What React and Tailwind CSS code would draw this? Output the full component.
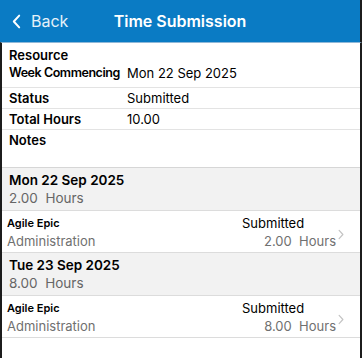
import React from "react";

const info = [
  { label: "Status", value: "Submitted" },
  { label: "Total Hours", value: "10.00" },
];

const days = [
  { date: "Mon 22 Sep 2025", hours: "2.00", entries: [{ title: "Agile Epic", task: "Administration", status: "Submitted", hours: "2.00" }] },
  { date: "Tue 23 Sep 2025", hours: "8.00", entries: [{ title: "Agile Epic", task: "Administration", status: "Submitted", hours: "8.00" }] },
];

const Chevron = ({ className }) => (
  <svg viewBox="0 0 8 14" className={className} fill="none" stroke="currentColor" strokeWidth="1.6" strokeLinecap="round" strokeLinejoin="round">
    <path d="M1.5 1.5 6.5 7l-5 5.5" />
  </svg>
);

const App = () => {
  return (
    <div className="w-[362px] h-[358px] flex flex-col bg-white overflow-hidden text-black" style={{ fontFamily: "Inter, 'Noto Sans', sans-serif" }}>
      <div className="h-[42px] shrink-0 bg-[#0a7bc4] border-r-2 border-[#1c1c1c] relative flex items-center">
        <div className="flex items-center pl-[12px] text-white">
          <svg viewBox="0 0 10 16" className="w-[9px] h-[15px]" fill="none" stroke="currentColor" strokeWidth="2.2" strokeLinecap="round" strokeLinejoin="round">
            <path d="M8 1.5 2 8l6 6.5" />
          </svg>
          <span className="ml-[10px] text-[16px] text-white/90">Back</span>
        </div>
        <div className="absolute inset-0 flex items-center justify-center pointer-events-none">
          <span className="text-[16px] font-semibold text-white">Time Submission</span>
        </div>
      </div>
      <div className="flex-1 flex flex-col border-t border-[#8fb8d8] border-l-2 border-r-2 border-l-[#1c1c1c] border-r-[#1c1c1c] leading-[18px]">
        <div className="pl-[7px] pt-[3px] pb-[5px] border-b border-[#e3e3e3]">
          <div className="h-[18px] flex items-center text-[13px] font-semibold">Resource</div>
          <div className="h-[18px] flex items-center text-[13px] whitespace-nowrap">
            <span className="w-[118px] shrink-0 font-semibold text-[12.5px] tracking-[-0.45px]">Week Commencing</span>
            <span>Mon 22 Sep 2025</span>
          </div>
        </div>
        {info.map((r) => (
          <div key={r.label} className="h-[21px] pl-[7px] flex items-center text-[13px] border-b border-[#e3e3e3]">
            <span className="w-[118px] shrink-0 font-semibold">{r.label}</span>
            <span>{r.value}</span>
          </div>
        ))}
        <div className="h-[38px] pl-[7px] pt-[1px] text-[13px] font-semibold border-b border-[#d6d6d6]">Notes</div>
        {days.map((d) => (
          <div key={d.date}>
            <div className="bg-[#f2f2f2] pl-[7px] pt-[3px] pb-[3px] border-b border-[#dcdcdc]">
              <div className="h-[18px] flex items-center text-[13.5px] font-semibold">{d.date}</div>
              <div className="h-[18px] flex items-center text-[13.5px] text-[#666]">{d.hours}&nbsp; Hours</div>
            </div>
            {d.entries.map((e, i) => (
              <div key={i} className="relative pl-[5px] pr-[24px] pt-[3px] pb-[2px] flex justify-between border-b border-[#dcdcdc]">
                <div>
                  <div className="h-[18px] flex items-center text-[11px] font-semibold">{e.title}</div>
                  <div className="h-[18px] flex items-center text-[13px] text-[#707070]">{e.task}</div>
                </div>
                <div className="flex flex-col items-end">
                  <div className="h-[18px] w-[94px] flex items-center text-[13px]">{e.status}</div>
                  <div className="h-[18px] flex items-center text-[13px] text-[#707070]">{e.hours}&nbsp; Hours</div>
                </div>
                <Chevron className="absolute right-[16px] top-[18px] w-[6px] h-[11px] text-[#c4c4c4]" />
              </div>
            ))}
          </div>
        ))}
      </div>
    </div>
  );
};

export default App;
